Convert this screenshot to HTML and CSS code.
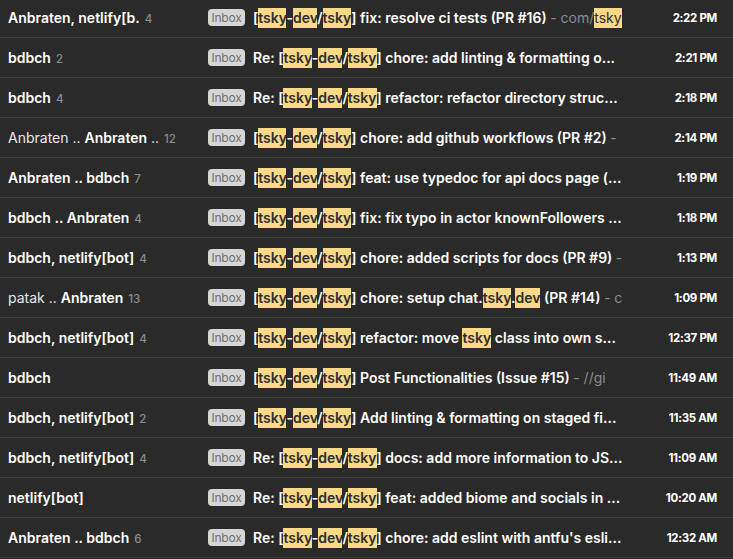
FILE: index.html
```html
<!DOCTYPE html>
<html lang="en">

<head>
    <meta charset="UTF-8">
    <meta name="viewport" content="width=device-width, initial-scale=1.0">
    <title>Inbox</title>
    <link rel="stylesheet" href="styles.css">
</head>

<body>

    <div id="threads">
        <div class="thread">
            <div class="sender"><b>Anbraten, netlify[b.</b><span class="count">4</span></div>
            <span class="badge">Inbox</span>
            <div class="subject">[<mark>tsky</mark>-<mark>dev</mark>/<mark>tsky</mark>] fix: resolve ci tests (PR #16) <span class="snippet">- com/<mark>tsky</mark></span></div>
            <div class="time">2:22 PM</div>
        </div>
        <div class="thread">
            <div class="sender"><b>bdbch</b><span class="count">2</span></div>
            <span class="badge">Inbox</span>
            <div class="subject">Re: [<mark>tsky</mark>-<mark>dev</mark>/<mark>tsky</mark>] chore: add linting &amp; formatting o...</div>
            <div class="time">2:21 PM</div>
        </div>
        <div class="thread">
            <div class="sender"><b>bdbch</b><span class="count">4</span></div>
            <span class="badge">Inbox</span>
            <div class="subject">Re: [<mark>tsky</mark>-<mark>dev</mark>/<mark>tsky</mark>] refactor: refactor directory struc...</div>
            <div class="time">2:18 PM</div>
        </div>
        <div class="thread">
            <div class="sender">Anbraten .. <b>Anbraten</b> ..<span class="count">12</span></div>
            <span class="badge">Inbox</span>
            <div class="subject">[<mark>tsky</mark>-<mark>dev</mark>/<mark>tsky</mark>] chore: add github workflows (PR #2) <span class="snippet">- </span></div>
            <div class="time">2:14 PM</div>
        </div>
        <div class="thread">
            <div class="sender"><b>Anbraten .. bdbch</b><span class="count">7</span></div>
            <span class="badge">Inbox</span>
            <div class="subject">[<mark>tsky</mark>-<mark>dev</mark>/<mark>tsky</mark>] feat: use typedoc for api docs page (...</div>
            <div class="time">1:19 PM</div>
        </div>
        <div class="thread">
            <div class="sender"><b>bdbch .. Anbraten</b><span class="count">4</span></div>
            <span class="badge">Inbox</span>
            <div class="subject">[<mark>tsky</mark>-<mark>dev</mark>/<mark>tsky</mark>] fix: fix typo in actor knownFollowers ...</div>
            <div class="time">1:18 PM</div>
        </div>
        <div class="thread">
            <div class="sender"><b>bdbch, netlify[bot]</b><span class="count">4</span></div>
            <span class="badge">Inbox</span>
            <div class="subject">[<mark>tsky</mark>-<mark>dev</mark>/<mark>tsky</mark>] chore: added scripts for docs (PR #9) <span class="snippet">- </span></div>
            <div class="time">1:13 PM</div>
        </div>
        <div class="thread">
            <div class="sender">patak .. <b>Anbraten</b><span class="count">13</span></div>
            <span class="badge">Inbox</span>
            <div class="subject">[<mark>tsky</mark>-<mark>dev</mark>/<mark>tsky</mark>] chore: setup chat.<mark>tsky</mark>.<mark>dev</mark> (PR #14) <span class="snippet">- c</span></div>
            <div class="time">1:09 PM</div>
        </div>
        <div class="thread">
            <div class="sender"><b>bdbch, netlify[bot]</b><span class="count">4</span></div>
            <span class="badge">Inbox</span>
            <div class="subject">[<mark>tsky</mark>-<mark>dev</mark>/<mark>tsky</mark>] refactor: move <mark>tsky</mark> class into own s...</div>
            <div class="time">12:37 PM</div>
        </div>
        <div class="thread">
            <div class="sender"><b>bdbch</b></div>
            <span class="badge">Inbox</span>
            <div class="subject">[<mark>tsky</mark>-<mark>dev</mark>/<mark>tsky</mark>] Post Functionalities (Issue #15) <span class="snippet">- //gi</span></div>
            <div class="time">11:49 AM</div>
        </div>
        <div class="thread">
            <div class="sender"><b>bdbch, netlify[bot]</b><span class="count">2</span></div>
            <span class="badge">Inbox</span>
            <div class="subject">[<mark>tsky</mark>-<mark>dev</mark>/<mark>tsky</mark>] Add linting &amp; formatting on staged fi...</div>
            <div class="time">11:35 AM</div>
        </div>
        <div class="thread">
            <div class="sender"><b>bdbch, netlify[bot]</b><span class="count">4</span></div>
            <span class="badge">Inbox</span>
            <div class="subject">Re: [<mark>tsky</mark>-<mark>dev</mark>/<mark>tsky</mark>] docs: add more information to JS...</div>
            <div class="time">11:09 AM</div>
        </div>
        <div class="thread">
            <div class="sender"><b>netlify[bot]</b></div>
            <span class="badge">Inbox</span>
            <div class="subject">Re: [<mark>tsky</mark>-<mark>dev</mark>/<mark>tsky</mark>] feat: added biome and socials in ...</div>
            <div class="time">10:20 AM</div>
        </div>
        <div class="thread">
            <div class="sender"><b>Anbraten .. bdbch</b><span class="count">6</span></div>
            <span class="badge">Inbox</span>
            <div class="subject">Re: [<mark>tsky</mark>-<mark>dev</mark>/<mark>tsky</mark>] chore: add eslint with antfu's esli...</div>
            <div class="time">12:32 AM</div>
        </div>
    </div>

</body>

</html>
```

FILE: styles.css
```css
/* Reset */
* {
    box-sizing: border-box;
    margin: 0;
    padding: 0;
}

body {
    background-color: #2a2a2a;
    color: #fff;
    font-family: Inter, 'Noto Sans', sans-serif;
    overflow: hidden;
}

/* Thread list */
#threads {
    margin-top: -2px;
}

.thread {
    display: flex;
    align-items: center;
    height: 40px;
    padding: 0 16px 0 8px;
    border-bottom: 1px solid #3d3d3d;
    white-space: nowrap;
}

.sender {
    flex: none;
    width: 200px;
    overflow: hidden;
    font-size: 14px;
    font-weight: 400;
    color: #e8e8e8;
}

.sender b {
    font-weight: 600;
    color: #fff;
}

.sender .count {
    margin-left: 5px;
    font-size: 11.5px;
    font-weight: 500;
    color: #8c8c8c;
}

/* Inbox label */
.badge {
    flex: none;
    width: 37px;
    height: 17px;
    line-height: 17px;
    margin-right: 8px;
    border-radius: 4px;
    background-color: #d6d6d6;
    color: #707070;
    font-size: 12px;
    text-align: center;
    letter-spacing: -0.2px;
}

.subject {
    flex: none;
    width: 370px;
    overflow: hidden;
    font-size: 14px;
    font-weight: 600;
    line-height: 20px;
}

.subject mark {
    padding: 2px 0;
    background-color: #fbd986;
    color: #2e2e2e;
}

.snippet {
    font-weight: 400;
    color: #8c8c8c;
}

.time {
    flex: 1;
    text-align: right;
    font-size: 11.5px;
    font-weight: 700;
    letter-spacing: -0.3px;
}
```
